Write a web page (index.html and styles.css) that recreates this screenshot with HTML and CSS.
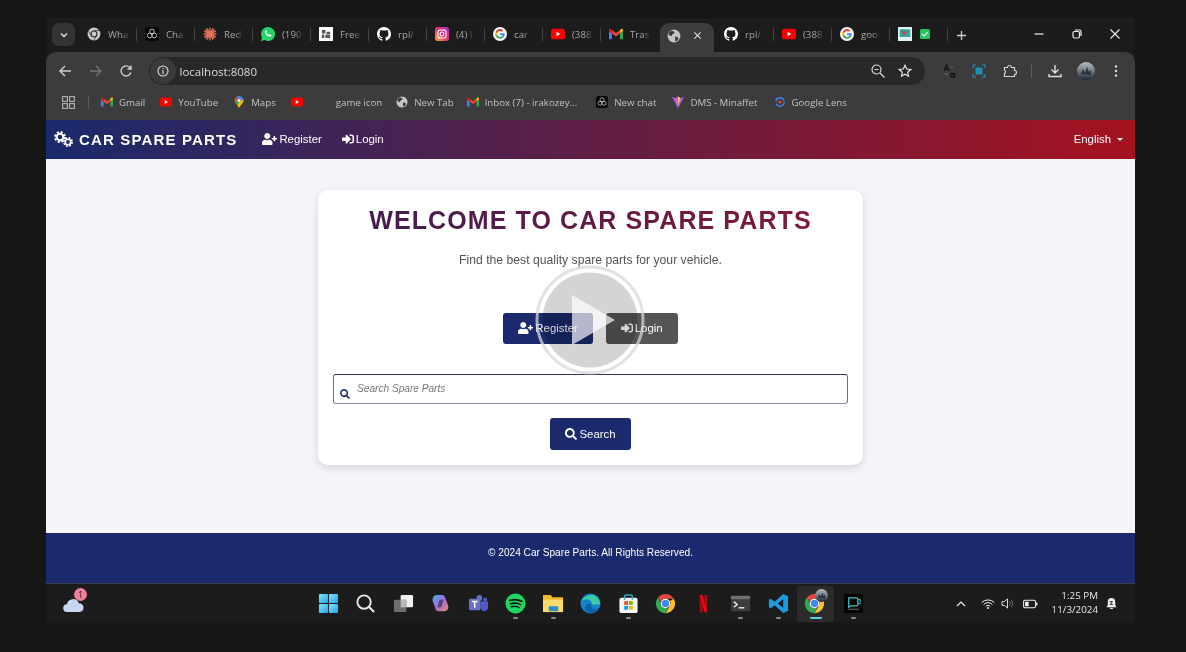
FILE: index.html
```html
<!DOCTYPE html>
<html lang="en">
<head>
<meta charset="utf-8">
<title>Car Spare Parts</title>
<link rel="stylesheet" href="styles.css">
</head>
<body>
<svg class="defs" aria-hidden="true">
  <defs>
    <linearGradient id="winG" x1="0" y1="0" x2="1" y2="1"><stop offset="0" stop-color="#7fe3f9"/><stop offset="1" stop-color="#1fa6ec"/></linearGradient>
    <linearGradient id="copG" x1="0" y1="0" x2="1" y2="1"><stop offset="0" stop-color="#3fb4e8"/><stop offset=".5" stop-color="#a06be0"/><stop offset="1" stop-color="#f4895a"/></linearGradient>
    <linearGradient id="igG" x1="0" y1="1" x2="1" y2="0"><stop offset="0" stop-color="#fbb03b"/><stop offset=".5" stop-color="#e1306c"/><stop offset="1" stop-color="#a634c9"/></linearGradient>
    <linearGradient id="avG" x1="0" y1="0" x2="0" y2="1"><stop offset="0" stop-color="#b9bcc0"/><stop offset=".55" stop-color="#6b7480"/><stop offset="1" stop-color="#1c2430"/></linearGradient>
    <symbol id="search" viewBox="0 0 512 512"><path d="M505 442.7L405.3 343c-4.5-4.5-10.6-7-17-7H372c27.6-35.3 44-79.7 44-128C416 93.1 322.9 0 208 0S0 93.1 0 208s93.1 208 208 208c48.3 0 92.7-16.4 128-44v16.3c0 6.4 2.5 12.5 7 17l99.7 99.7c9.4 9.4 24.6 9.4 33.9 0l28.3-28.3c9.4-9.4 9.4-24.6.1-34zM208 336c-70.7 0-128-57.2-128-128 0-70.7 57.2-128 128-128 70.7 0 128 57.2 128 128 0 70.7-57.2 128-128 128z"/></symbol>
    <symbol id="userplus" viewBox="0 0 640 512"><path d="M624 208h-64v-64c0-8.8-7.2-16-16-16h-32c-8.8 0-16 7.2-16 16v64h-64c-8.8 0-16 7.2-16 16v32c0 8.8 7.2 16 16 16h64v64c0 8.8 7.2 16 16 16h32c8.8 0 16-7.2 16-16v-64h64c8.8 0 16-7.2 16-16v-32c0-8.8-7.2-16-16-16zm-400 48c70.7 0 128-57.3 128-128S294.7 0 224 0 96 57.3 96 128s57.3 128 128 128zm89.6 32h-16.7c-22.2 10.2-46.9 16-72.9 16s-50.6-5.8-72.9-16h-16.7C60.2 288 0 348.2 0 422.4V464c0 26.5 21.5 48 48 48h352c26.5 0 48-21.5 48-48v-41.6c0-74.2-60.2-134.4-134.4-134.4z"/></symbol>
    <symbol id="signin" viewBox="0 0 512 512"><path d="M416 448h-84c-6.6 0-12-5.4-12-12v-40c0-6.6 5.4-12 12-12h84c17.7 0 32-14.3 32-32V160c0-17.7-14.3-32-32-32h-84c-6.6 0-12-5.4-12-12V76c0-6.6 5.4-12 12-12h84c53 0 96 43 96 96v192c0 53-43 96-96 96zm-47-201L201 79c-15-15-41-4.5-41 17v96H24c-13.3 0-24 10.7-24 24v96c0 13.3 10.7 24 24 24h136v96c0 21.5 26 32 41 17l168-168c9.3-9.4 9.3-24.6 0-34z"/></symbol>
    <symbol id="chrome" viewBox="0 0 24 24"><path fill="#e8453c" d="M12 1a11 11 0 0 1 9.500 5.500H12a5.500 5.500 0 0 0-5 3.200L3.400 5.200A11 11 0 0 1 12 1z"/><path fill="#fbc02d" d="M21.500 6.500A11 11 0 0 1 12 23l4.700-8.200A5.500 5.500 0 0 0 16.800 9z"/><path fill="#34a853" d="M3.400 5.200 7.900 13a5.500 5.500 0 0 0 6.700 4.100L12 23A11 11 0 0 1 3.400 5.200z"/><circle cx="12" cy="12" r="5.400" fill="#fff"/><circle cx="12" cy="12" r="4.200" fill="#4285f4"/></symbol>
    <symbol id="chromegrey" viewBox="0 0 24 24"><circle cx="12" cy="12" r="11" fill="#c9c9c9"/><circle cx="12" cy="12" r="6" fill="#2a2a2a"/><circle cx="12" cy="12" r="4.200" fill="#c9c9c9"/><path d="M12 6h9M7 15 2.800 7M16 15l-4.500 8" stroke="#2a2a2a" stroke-width="1.200" fill="none"/></symbol>
    <symbol id="g" viewBox="0 0 24 24"><circle cx="12" cy="12" r="12" fill="#fff"/><path fill="#4285f4" d="M20 12.200c0-.6 0-1.100-.1-1.600H12v3h4.500a3.900 3.900 0 0 1-1.700 2.500v2.100h2.700c1.600-1.400 2.500-3.500 2.500-6z"/><path fill="#34a853" d="M12 20.300c2.200 0 4.100-.7 5.500-2.100l-2.700-2.100a5 5 0 0 1-7.500-2.700H4.500v2.100a8.300 8.300 0 0 0 7.500 4.800z"/><path fill="#fbbc05" d="M7.300 13.400a5 5 0 0 1 0-3.200V8.100H4.500a8.300 8.300 0 0 0 0 7.400z"/><path fill="#ea4335" d="M12 6.900c1.200 0 2.300.4 3.200 1.200l2.400-2.400A8.300 8.300 0 0 0 4.500 8.100l2.800 2.100A5 5 0 0 1 12 6.900z"/></symbol>
    <symbol id="gh" viewBox="0 0 16 16"><path fill="#fff" d="M8 0C3.58 0 0 3.58 0 8c0 3.54 2.29 6.53 5.47 7.59.4.07.55-.17.55-.38 0-.19-.01-.82-.01-1.49-2.01.37-2.53-.49-2.69-.94-.09-.23-.48-.94-.82-1.13-.28-.15-.68-.52-.01-.53.63-.01 1.08.58 1.23.82.72 1.21 1.87.87 2.33.66.07-.52.28-.87.51-1.07-1.78-.2-3.64-.89-3.64-3.95 0-.87.31-1.59.82-2.15-.08-.2-.36-1.02.08-2.12 0 0 .67-.21 2.2.82.64-.18 1.32-.27 2-.27s1.36.09 2 .27c1.53-1.04 2.2-.82 2.2-.82.44 1.1.16 1.92.08 2.12.51.56.82 1.27.82 2.15 0 3.07-1.87 3.75-3.65 3.95.29.25.54.73.54 1.48 0 1.07-.01 1.93-.01 2.2 0 .21.15.46.55.38A8 8 0 0 0 16 8c0-4.42-3.58-8-8-8z"/></symbol>
    <symbol id="yt" viewBox="0 0 24 18"><rect width="24" height="18" rx="4.500" fill="#f00"/><path d="M9.500 5.200v7.600l6.500-3.800z" fill="#fff"/></symbol>
    <symbol id="gmail" viewBox="0 0 24 18"><path fill="#4285f4" d="M1 18h4V8L0 4v12.500A1.500 1.500 0 0 0 1 18z"/><path fill="#34a853" d="M19 18h4a1.500 1.500 0 0 0 1-1.500V4l-5 4z"/><path fill="#ea4335" d="M5 8V2l7 5.300L19 2v6l-7 5.200z"/><path fill="#fbbc04" d="M19 2v6l5-4V2c0-2-2.400-2.600-3.500-1.500z"/><path fill="#c5221f" d="M0 4l5 4V2L3.500.5C2.400-.6 0 0 0 2z"/></symbol>
    <symbol id="globe" viewBox="0 0 24 24"><circle cx="12" cy="12" r="11" fill="#c4c4c4"/><path fill="#3a3a3a" d="M8 2.500 13 5l-1 3-3 1-1 3-4-1-1.500-3A10 10 0 0 1 8 2.500zM14 13l5 1 .5 3-3.500 4.500-2-1.500z"/></symbol>
    <symbol id="oai" viewBox="0 0 24 24"><rect width="24" height="24" rx="5" fill="#050505"/><g fill="none" stroke="#ddd" stroke-width="1.400"><circle cx="12" cy="7.500" r="4"/><circle cx="8" cy="14.500" r="4"/><circle cx="16" cy="14.500" r="4"/></g></symbol>
    <symbol id="gear" viewBox="0 0 20 20"><circle cx="10" cy="10" r="5.500" fill="none" stroke="#fff" stroke-width="3.400"/><circle cx="10" cy="10" r="8.300" fill="none" stroke="#fff" stroke-width="3.200" stroke-dasharray="3.700 2.820"/></symbol>
    <symbol id="pin" viewBox="0 0 18 24"><path fill="#34a853" d="M9 24C6 18 0 14 0 9a9 9 0 0 1 4-7.500L12 14z"/><path fill="#fbbc04" d="M9 24c3-6 9-10 9-15 0-1.500-.4-3-1-4L6 17z"/><path fill="#4285f4" d="M4 1.500A9 9 0 0 1 17 5L12 11z"/><path fill="#ea4335" d="M0 9a9 9 0 0 1 4-7.500L8 6 3 12z"/><circle cx="9" cy="9" r="3" fill="#fff"/></symbol>
  </defs>
</svg>

<div class="window">
  <div class="tabstrip">
    <div class="tabmenu"><svg class="ic10" viewBox="0 0 10 10"><path d="M2 3.500 5 6.500 8 3.500" fill="none" stroke="#ddd" stroke-width="1.500"/></svg></div>
    <div class="tab"><svg class="tabic"><use href="#chromegrey"/></svg><span class="tabtext">Wha</span><i class="sep"></i></div>
    <div class="tab"><svg class="tabic"><use href="#oai"/></svg><span class="tabtext">Cha</span><i class="sep"></i></div>
    <div class="tab"><svg class="tabic" viewBox="0 0 24 24"><g stroke="#e2725b" stroke-width="2.200"><path d="M12 1v22M1 12h22M4 4l16 16M20 4 4 20M7 2l10 20M17 2 7 22M2 7l20 10M22 7 2 17"/></g></svg><span class="tabtext">Red</span><i class="sep"></i></div>
    <div class="tab"><svg class="tabic" viewBox="0 0 24 24"><path fill="#25d366" d="M12 0a12 12 0 0 0-10.300 18L0 24l6.200-1.600A12 12 0 1 0 12 0z"/><path fill="#fff" d="M8.500 5.500c-.5 0-1.700.8-1.700 3s2.200 5.500 4.500 7c2.500 1.600 5 1.900 6 .2.600-1 .7-2 .4-2.200l-2.700-1.300c-.4 0-1 1.200-1.500 1.400-1 .2-4-2.400-4.400-3.600 0-.4 1-1.200.9-1.700L9.400 5.800c-.2-.3-.6-.3-.9-.3z"/></svg><span class="tabtext">(190</span><i class="sep"></i></div>
    <div class="tab"><svg class="tabic" viewBox="0 0 24 24"><rect width="24" height="24" fill="#fff"/><path fill="#555" d="M5 5h6v6H5zM13 8h6v4h-6zM5 13h4v6H5zM11 13h8v6h-8z"/></svg><span class="tabtext">Free</span><i class="sep"></i></div>
    <div class="tab"><svg class="tabic"><use href="#gh"/></svg><span class="tabtext">rpl/</span><i class="sep"></i></div>
    <div class="tab"><svg class="tabic" viewBox="0 0 24 24"><rect width="24" height="24" rx="5" fill="url(#igG)"/><rect x="5" y="5" width="14" height="14" rx="4" fill="none" stroke="#fff" stroke-width="1.800"/><circle cx="12" cy="12" r="3.300" fill="none" stroke="#fff" stroke-width="1.800"/></svg><span class="tabtext">(4) I</span><i class="sep"></i></div>
    <div class="tab"><svg class="tabic"><use href="#g"/></svg><span class="tabtext">car</span><i class="sep"></i></div>
    <div class="tab"><svg class="tabic"><use href="#yt"/></svg><span class="tabtext">(388</span><i class="sep"></i></div>
    <div class="tab"><svg class="tabic"><use href="#gmail"/></svg><span class="tabtext">Tras</span></div>
    <div class="tab tab-active"><svg class="tabic"><use href="#globe"/></svg><svg class="tabclose" viewBox="0 0 10 10"><path d="M1.500 1.500l7 7M8.500 1.500l-7 7" stroke="#e0e0e0" stroke-width="1.200"/></svg></div>
    <div class="tab"><svg class="tabic"><use href="#gh"/></svg><span class="tabtext">rpl/</span><i class="sep"></i></div>
    <div class="tab"><svg class="tabic"><use href="#yt"/></svg><span class="tabtext">(388</span><i class="sep"></i></div>
    <div class="tab"><svg class="tabic"><use href="#g"/></svg><span class="tabtext">goo</span><i class="sep"></i></div>
    <div class="tab"><svg class="tabic" viewBox="0 0 24 24"><rect width="24" height="24" fill="#dff3f2"/><rect x="3" y="4" width="18" height="13" fill="#2ba7a0"/><circle cx="11" cy="10" r="3.500" fill="#e23b4a"/></svg><svg class="tabic tabic-gap" viewBox="0 0 24 24"><rect x="2" y="2" width="20" height="20" rx="3" fill="#25c55e"/><path d="M6.500 12l4 4 7-8" fill="none" stroke="#fff" stroke-width="2.200"/></svg><i class="sep"></i></div>
    <svg class="newtab" viewBox="0 0 12 12"><path d="M6 1v10M1 6h10" stroke="#cfcfcf" stroke-width="1.400"/></svg>
    <div class="winctrls">
      <svg class="ic10" viewBox="0 0 10 10"><path d="M.5 5h9" stroke="#eee" stroke-width="1.200"/></svg>
      <svg class="ic10" viewBox="0 0 10 10"><rect x="1" y="2.500" width="6.500" height="6.500" rx="1.500" fill="none" stroke="#eee" stroke-width="1.200"/><path d="M3 1h4.500A1.500 1.500 0 0 1 9 2.500V7" fill="none" stroke="#eee" stroke-width="1.200"/></svg>
      <svg class="ic10" viewBox="0 0 10 10"><path d="M.5.500l9 9M9.500.500l-9 9" stroke="#eee" stroke-width="1.100"/></svg>
    </div>
  </div>

  <div class="chrome-top">
    <div class="toolbar">
      <svg class="tool" viewBox="0 0 14 14"><path d="M13 7H2M7 2 2 7l5 5" fill="none" stroke="#cfcfcf" stroke-width="1.400"/></svg>
      <svg class="tool" viewBox="0 0 14 14"><path d="M1 7h11M7 2l5 5-5 5" fill="none" stroke="#747474" stroke-width="1.400"/></svg>
      <svg class="tool" viewBox="0 0 14 14"><path d="M11.800 8.500A5 5 0 1 1 10.500 3.300L12 5M12 1.500V5H8.500" fill="none" stroke="#cfcfcf" stroke-width="1.400"/></svg>
      <div class="omnibox">
        <span class="infochip"><svg class="ic12" viewBox="0 0 12 12"><circle cx="6" cy="6" r="5" fill="none" stroke="#ddd" stroke-width="1.100"/><path d="M6 5.200V9M6 3v1.100" stroke="#ddd" stroke-width="1.200"/></svg></span>
        <span class="url">localhost:8080</span>
        <svg class="ic14 omni-zoom" viewBox="0 0 14 14"><circle cx="5.500" cy="5.500" r="4.500" fill="none" stroke="#ddd" stroke-width="1.200"/><path d="M3.500 5.500h4M9 9l4.500 4.500" stroke="#ddd" stroke-width="1.200"/></svg>
        <svg class="ic14 omni-star" viewBox="0 0 14 14"><path d="M7 1.300l1.700 3.700 4 .5-3 2.700.8 4L7 10.200l-3.500 2 .8-4-3-2.700 4-.5z" fill="none" stroke="#e5e5e5" stroke-width="1.200"/></svg>
      </div>
      <div class="toolright">
        <svg class="ic14 t-trans" viewBox="0 0 14 14"><path d="M1 7 3.500 1 6 7M2 5h3" fill="none" stroke="#111" stroke-width="1.200"/><path d="M8 9.500h3.500V13H9a1.500 1.500 0 0 1 0-3h2.500" fill="none" stroke="#111" stroke-width="1.300"/><path d="M8 3h2M2 10h3" stroke="#777"/></svg>
        <svg class="ic14 t-shot" viewBox="0 0 14 14"><rect x="3.500" y="3.500" width="7" height="7" fill="#1f8fb5"/><path d="M1 4V1h3M10 1h3v3M13 10v3h-3M4 13H1v-3" fill="none" stroke="#1f8fb5" stroke-width="1.200"/></svg>
        <svg class="ic14 t-ext" viewBox="0 0 14 14"><path d="M1.500 3.500h3a2 2 0 0 1 4 0h3v3a2 2 0 0 1 0 4v2h-10v-3a2 2 0 0 0 0-3.500z" fill="none" stroke="#d5d5d5" stroke-width="1.200"/></svg>
        <i class="t-sep"></i>
        <svg class="ic14 t-dl" viewBox="0 0 14 14"><path d="M7 1v7.500M3.500 5.500 7 9l3.500-3.500M1 10v2.500h12V10" fill="none" stroke="#ddd" stroke-width="1.400"/></svg>
        <svg class="avatar" viewBox="0 0 18 18"><circle cx="9" cy="9" r="9" fill="url(#avG)"/><path d="M4 12l2-5 2 4 2-6 2 5 2-2v5z" fill="#2a3340"/></svg>
        <svg class="ic14 t-dots" viewBox="0 0 14 14"><circle cx="7" cy="2.500" r="1.200" fill="#ddd"/><circle cx="7" cy="7" r="1.200" fill="#ddd"/><circle cx="7" cy="11.500" r="1.200" fill="#ddd"/></svg>
      </div>
    </div>
    <div class="bookmarks">
      <svg class="ic13" viewBox="0 0 13 13"><g fill="none" stroke="#b5b5b5" stroke-width="1.100"><rect x=".6" y=".6" width="4.800" height="4.800"/><rect x="7.600" y=".6" width="4.800" height="4.800"/><rect x=".6" y="7.600" width="4.800" height="4.800"/><rect x="7.600" y="7.600" width="4.800" height="4.800"/></g></svg>
      <i class="bm-sep"></i>
      <span class="bm"><svg class="bmic"><use href="#gmail"/></svg>Gmail</span>
      <span class="bm"><svg class="bmic"><use href="#yt"/></svg>YouTube</span>
      <span class="bm"><svg class="bmic"><use href="#pin"/></svg>Maps</span>
      <span class="bm"><svg class="bmic"><use href="#yt"/></svg></span>
      <span class="bm bm-game">game icon</span>
      <span class="bm"><svg class="bmic"><use href="#globe"/></svg>New Tab</span>
      <span class="bm bm-inbox"><svg class="bmic"><use href="#gmail"/></svg>Inbox (7) - irakozey...</span>
      <span class="bm bm-chat"><svg class="bmic"><use href="#oai"/></svg>New chat</span>
      <span class="bm bm-dms"><svg class="bmic" viewBox="0 0 14 14"><path d="M0 1l7 13 7-13-4 1.500L7 .5 4 2.500z" fill="#bd5cf5"/><path d="M7 1 9.500 2 7 11z" fill="#ffcf33"/></svg>DMS - Minaffet</span>
      <span class="bm"><svg class="bmic" viewBox="0 0 14 14"><circle cx="7" cy="7" r="5" fill="none" stroke="#4285f4" stroke-width="1.800" stroke-dasharray="8 0 5 3"/><circle cx="7" cy="7" r="1.800" fill="#ea4335"/></svg>Google Lens</span>
    </div>
  </div>

  <nav class="appnav">
    <span class="cogs"><svg class="cog-big"><use href="#gear"/></svg><svg class="cog-small"><use href="#gear"/></svg></span>
    <span class="brand">CAR SPARE PARTS</span>
    <a class="navlink navlink-first"><svg class="fa-user"><use href="#userplus"/></svg>Register</a>
    <a class="navlink"><svg class="fa-sign"><use href="#signin"/></svg>Login</a>
    <a class="lang">English<i class="caret"></i></a>
  </nav>

  <main class="content">
    <section class="card">
      <h1 class="title">WELCOME TO CAR SPARE PARTS</h1>
      <p class="lead">Find the best quality spare parts for your vehicle.</p>
      <div class="actions">
        <a class="btn btn-navy"><svg class="fa-user"><use href="#userplus"/></svg>Register</a>
        <a class="btn btn-grey"><svg class="fa-sign"><use href="#signin"/></svg>Login</a>
      </div>
      <div class="searchbox">
        <svg class="searchbox-ic"><use href="#search"/></svg>
        <span class="placeholder">Search Spare Parts</span>
      </div>
      <a class="btn btn-navy btn-search"><svg class="fa-search"><use href="#search"/></svg>Search</a>
    </section>
  </main>

  <footer class="appfoot">© 2024 Car Spare Parts. All Rights Reserved.</footer>

  <div class="taskbar">
    <div class="weather">
      <svg class="cloud" viewBox="0 0 24 16"><path d="M5 16a4.500 4.500 0 0 1-.5-9A7 7 0 0 1 18 6a5 5 0 0 1 1 10z" fill="#c9d6f2"/></svg>
      <b class="badge">1</b>
    </div>
    <div class="apps">
      <span class="app"><svg class="appic" viewBox="0 0 22 22"><g fill="url(#winG)"><rect x="1" y="1" width="9.500" height="9.500" rx="1"/><rect x="11.500" y="1" width="9.500" height="9.500" rx="1"/><rect x="1" y="11.500" width="9.500" height="9.500" rx="1"/><rect x="11.500" y="11.500" width="9.500" height="9.500" rx="1"/></g></svg><i class="dot dot-none"></i></span>
      <span class="app"><svg class="appic" viewBox="0 0 22 22"><circle cx="9.500" cy="9.500" r="7" fill="none" stroke="#e6e6e6" stroke-width="2"/><path d="M14.500 14.500 20 20" stroke="#e6e6e6" stroke-width="2.200"/></svg><i class="dot dot-none"></i></span>
      <span class="app"><svg class="appic" viewBox="0 0 22 22"><rect x="8" y="2" width="13" height="13" rx="1.500" fill="#f2f2f2"/><rect x="1" y="7" width="13" height="13" rx="1.500" fill="#6e6e6e"/><rect x="8" y="7" width="6" height="8" fill="#b8b8b8"/></svg><i class="dot dot-none"></i></span>
      <span class="app"><svg class="appic" viewBox="0 0 22 22"><path d="M7 2h6c2 0 2.500 2 3 3l3 8c1 3-1 6-4 6H9c-2 0-3-1-3.500-3L3 9C2 5 4 2 7 2z" fill="url(#copG)"/><path d="M10 7h4l-2 8H8z" fill="#1c1c1c" opacity=".55"/></svg><i class="dot dot-none"></i></span>
      <span class="app"><svg class="appic" viewBox="0 0 22 22"><circle cx="12" cy="5" r="3" fill="#6a6fc9"/><circle cx="18" cy="7" r="2.200" fill="#5059c9"/><path d="M13 9h8v6c0 3-2 4-4 4s-4-2-4-4z" fill="#5059c9"/><rect x="1" y="6" width="12" height="12" rx="1.500" fill="#6a6fc9"/><path d="M4 9h6M7 9v6.500" stroke="#fff" stroke-width="1.600"/></svg><i class="dot dot-none"></i></span>
      <span class="app"><svg class="appic" viewBox="0 0 22 22"><circle cx="11" cy="11" r="10.500" fill="#1ed760"/><g fill="none" stroke="#111" stroke-linecap="round"><path d="M5 7.800c4-1.200 9-.9 12.500 1" stroke-width="2"/><path d="M5.800 11.200c3.500-1 7.500-.7 10.500 1" stroke-width="1.700"/><path d="M6.500 14.400c3-.8 6-.5 8.500.9" stroke-width="1.400"/></g></svg><i class="dot"></i></span>
      <span class="app"><svg class="appic" viewBox="0 0 22 22"><path d="M0 2h8l2 2.500H21V20H0z" fill="#f3b72e"/><path d="M0 7h21v13H0z" fill="#fbdc6a"/><rect x="6" y="14" width="10" height="5" rx="1" fill="#2b8fd0"/></svg><i class="dot"></i></span>
      <span class="app"><svg class="appic" viewBox="0 0 22 22"><circle cx="11" cy="11" r="10.500" fill="#1583c9"/><path d="M21 12c0-6-4-10-9-10C6 2 2 6 1 10c2-3 5-4 8-3 3 1 4 3 3 5h9z" fill="#3cc9a7"/><path d="M12 12c-1 3 1 5 4 5 2 0 3-.5 4-1.500-2 4-5 5.500-8 5.500-4 0-7-3-6-7 .5-2 3-4 6-2z" fill="#0f5ea8"/></svg><i class="dot dot-none"></i></span>
      <span class="app"><svg class="appic" viewBox="0 0 22 22"><rect x="1.500" y="5" width="19" height="16" rx="2" fill="#f6f6f6"/><path d="M7 7V3.500A1.500 1.500 0 0 1 8.500 2h5A1.500 1.500 0 0 1 15 3.500V7" fill="none" stroke="#35a8c4" stroke-width="1.600"/><rect x="6.500" y="8.500" width="4" height="4" fill="#f25022"/><rect x="11.500" y="8.500" width="4" height="4" fill="#7fba00"/><rect x="6.500" y="13.500" width="4" height="4" fill="#00a4ef"/><rect x="11.500" y="13.500" width="4" height="4" fill="#ffb900"/></svg><i class="dot"></i></span>
      <span class="app"><svg class="appic"><use href="#chrome"/></svg><i class="dot dot-none"></i></span>
      <span class="app"><svg class="appic" viewBox="0 0 22 22"><path d="M7 2h3v18l-3 .5zM12 2h3v18.500l-3-.5z" fill="#b20710"/><path d="M7 2h3l5 18.500-3-.5z" fill="#e50914"/></svg><i class="dot dot-none"></i></span>
      <span class="app"><svg class="appic" viewBox="0 0 22 22"><rect x="1" y="3" width="20" height="16" rx="1.500" fill="#3c3c3c"/><rect x="1" y="3" width="20" height="3.500" fill="#707070"/><path d="M4 9l3.500 3L4 15" fill="none" stroke="#eee" stroke-width="1.500"/><path d="M9 15.500h6" stroke="#eee" stroke-width="1.500"/></svg><i class="dot"></i></span>
      <span class="app"><svg class="appic" viewBox="0 0 22 22"><path d="M16 1l5 2.500v15L16 21 7 12.800 3 16l-2-1V7l2-1 4 3.200z" fill="#1c9ce0"/><path d="M16 6.500 10 11l6 4.500z" fill="#1c1c1c"/></svg><i class="dot"></i></span>
      <span class="app app-active"><span class="appstack"><svg class="appic"><use href="#chrome"/></svg><svg class="app-avatar" viewBox="0 0 18 18"><circle cx="9" cy="9" r="9" fill="url(#avG)"/><path d="M4 12l2-5 2 4 2-6 2 5 2-2v5z" fill="#2a3340"/></svg></span><i class="dot dot-active"></i></span>
      <span class="app"><svg class="appic" viewBox="0 0 22 22"><rect x="1" y="1" width="20" height="20" fill="#050505"/><path d="M6 5h8a1.500 1.500 0 0 1 1.500 1.500V12A1.500 1.500 0 0 1 14 13.500H8L6 15z" fill="none" stroke="#3cc4c4" stroke-width="1.300"/><path d="M15.500 7.500 18 6.500v5l-2.500-1" fill="none" stroke="#3cc4c4"/><path d="M5 17h12" stroke="#888" stroke-width=".8"/></svg><i class="dot"></i></span>
    </div>
    <div class="tray">
      <svg class="tr-chev" viewBox="0 0 10 6"><path d="M1 5 5 1l4 4" fill="none" stroke="#eee" stroke-width="1.200"/></svg>
      <svg class="tr-wifi" viewBox="0 0 14 10"><g fill="none" stroke="#eee" stroke-width="1"><path d="M.7 3.500a9 9 0 0 1 12.600 0M2.700 5.500a6 6 0 0 1 8.600 0M4.700 7.500a3 3 0 0 1 4.600 0"/></g><circle cx="7" cy="9" r="1" fill="#eee"/></svg>
      <svg class="tr-vol" viewBox="0 0 14 12"><path d="M1 4h2.500L7 1v10L3.500 8H1z" fill="none" stroke="#eee"/><path d="M9 3.500a3.500 3.500 0 0 1 0 5M11 2a6 6 0 0 1 0 8" fill="none" stroke="#777"/></svg>
      <svg class="tr-bat" viewBox="0 0 16 10"><rect x=".6" y="1" width="12.800" height="8" rx="1.500" fill="none" stroke="#eee" stroke-width="1.100"/><rect x="2.200" y="2.600" width="3.800" height="4.800" fill="#eee"/><rect x="14" y="3.500" width="1.500" height="3" fill="#eee"/></svg>
      <span class="clock"><span>1:25 PM</span><span>11/3/2024</span></span>
      <svg class="tr-bell" viewBox="0 0 14 14"><path d="M7 1a4 4 0 0 0-4 4v3.500L1.500 11h11L11 8.500V5a4 4 0 0 0-4-4z" fill="#eee"/><path d="M5.500 12.300h3" stroke="#eee" stroke-width="1.300"/><path d="M5 5h3L5.500 8H8.500" fill="none" stroke="#1c1c1c"/></svg>
    </div>
  </div>
</div>

<svg class="playover" viewBox="0 0 116 116" aria-hidden="true">
  <circle cx="58" cy="58" r="47.500" fill="rgba(0,0,0,.17)"/>
  <circle cx="58" cy="58" r="53" fill="none" stroke="rgba(215,215,215,.75)" stroke-width="3"/>
  <path d="M40 33 83 58 40 83z" fill="rgba(255,255,255,.68)"/>
</svg>
</body>
</html>
```
FILE: styles.css
```css
* { box-sizing: border-box; }
html, body { margin: 0; height: 652px; overflow: hidden; }
body { background: #161616; padding: 18px 51px 0 46px; position: relative; font-family: "Liberation Sans", Arial, sans-serif; }
a { color: inherit; text-decoration: none; }
i, b { font-style: normal; }
svg { display: block; flex: none; fill: currentColor; }
.defs { width: 0; height: 0; overflow: hidden; }
.ic10 { width: 10px; height: 10px; }
.ic12 { width: 12px; height: 12px; }
.ic13 { width: 13px; height: 13px; }
.ic14 { width: 14px; height: 14px; }

.window { width: 1089px; height: 605px; display: flex; flex-direction: column; background: #1c1c1c; filter: blur(.35px); }

/* tab strip */
.tabstrip { height: 34px; flex: none; display: flex; align-items: flex-start; padding: 5px 0 0 6px; font-family: "Open Sans", "Noto Sans", sans-serif; font-size: 9.700px; color: #a8a8a8; }
.tabmenu { width: 23px; height: 23px; margin-right: 4px; border-radius: 7px; background: #343434; display: flex; align-items: center; justify-content: center; }
.tab { width: 58px; height: 24px; display: flex; align-items: center; padding: 0 0 2px 8px; }
.tabic { width: 14px; height: 14px; margin-right: 7px; }
.tabic-gap { margin-left: 0; margin-right: 0; width: 12px; height: 12px; }
.tabtext { white-space: nowrap; -webkit-mask-image: linear-gradient(90deg, #000 65%, rgba(0,0,0,.25)); mask-image: linear-gradient(90deg, #000 65%, rgba(0,0,0,.25)); }
.sep { width: 1px; height: 13px; background: #444; margin-left: auto; }
.tab-active { width: 54px; height: 29px; margin: 0 2px 0 1px; padding: 0 0 4px 7px; background: #3c3c3c; border-radius: 9px 9px 0 0; }
.tabclose { width: 9px; height: 9px; margin-left: 5px; }
.newtab { width: 11px; height: 11px; margin: 7px 0 0 8px; }
.winctrls { display: flex; gap: 28px; margin: 6px 0 0 auto; padding-right: 15px; }

/* toolbar + bookmarks */
.chrome-top { flex: none; height: 68px; background: #3c3c3c; border-radius: 10px 10px 0 0; font-family: "Open Sans", "Noto Sans", sans-serif; }
.toolbar { height: 36px; display: flex; align-items: center; padding: 2px 0 0 12px; }
.tool { width: 14px; height: 14px; margin-right: 16.500px; }
.omnibox { width: 776px; height: 28px; margin-left: -1px; border-radius: 14px; background: #282828; display: flex; align-items: center; padding: 0 13px 0 1px; }
.infochip { width: 26px; height: 26px; border-radius: 50%; background: #3a3a3a; display: flex; align-items: center; justify-content: center; margin-right: 4px; }
.url { color: #dcdcdc; font-size: 11.500px; }
.omni-zoom { margin-left: auto; margin-right: 13px; }
.toolright { display: flex; align-items: center; margin-left: 18px; }
.t-shot { margin-left: 15px; }
.t-ext { margin-left: 17px; }
.t-sep { width: 1px; height: 14px; background: #5c5c5c; margin-left: 14px; }
.t-dl { margin-left: 16px; }
.avatar { width: 18px; height: 18px; margin-left: 15px; }
.t-dots { margin-left: 14px; }
.bookmarks { height: 32px; padding: 0 0 4px 16px; display: flex; align-items: center; color: #c2c2c2; font-size: 9.700px; }
.bm-sep { width: 1px; height: 13px; background: #5c5c5c; margin: 0 12px 0 13px; }
.bm { display: flex; align-items: center; gap: 6px; margin-right: 15px; white-space: nowrap; }
.bmic { width: 12px; height: 12px; }
.bm-game { margin-left: 18px; margin-right: 14px; }
.bm-inbox { margin-left: -2px; margin-right: 19px; }
.bm-chat { margin-right: 16px; }
.bm-dms { margin-right: 16px; }

/* app nav */
.appnav { flex: none; height: 39px; display: flex; align-items: center; padding: 0 12px 1px 8px; color: #fff; background: linear-gradient(90deg, #1a2a6c, #a5121f); }
.cogs { width: 19px; height: 16px; margin-right: 6px; display: grid; grid-template-columns: 11px 8px; }
.cog-big { width: 12px; height: 12px; }
.cog-small { width: 10px; height: 10px; margin: 6px 0 0 -2px; }
.brand { font-size: 15px; font-weight: 700; letter-spacing: 1.150px; margin-right: 25px; white-space: nowrap; }
.navlink { display: flex; align-items: center; font-size: 11.400px; margin-right: 20px; }
.fa-user { width: 15px; height: 12px; margin-right: 2px; color: #fff; }
.fa-sign { width: 12px; height: 12px; margin-right: 2px; }
.lang { margin-left: auto; display: flex; align-items: center; font-size: 11.400px; }
.caret { width: 0; height: 0; margin-left: 6px; border: 3px solid transparent; border-top-color: #fff; border-bottom: 0; }

/* content */
.content { flex: 1; background: #f4f5f9; display: flex; justify-content: center; align-items: flex-start; padding-top: 31px; }
.card { width: 545px; height: 275px; padding: 15px; display: flex; flex-direction: column; align-items: center; background: #fff; border-radius: 10px; box-shadow: 0 3px 8px rgba(0,0,0,.13); }
.title { margin: 0; width: 100%; text-align: center; font-size: 25px; line-height: 30px; font-weight: 700; letter-spacing: 1.100px; background: linear-gradient(90deg, #3f1c52, #851a38); -webkit-background-clip: text; background-clip: text; color: transparent; }
.lead { margin: 18px 0 0; font-size: 12.200px; line-height: 14px; color: #555; }
.actions { display: flex; gap: 13px; margin-top: 46px; }
.btn { height: 31px; display: flex; align-items: center; justify-content: center; padding: 0 15px 1px; color: #fff; font-size: 11.400px; border-radius: 3px; }
.btn-navy { background: #1a2a6c; }
.btn-grey { background: #555; }
.searchbox { width: 100%; height: 30px; margin-top: 30px; display: flex; align-items: center; padding-left: 6px; background: #fff; border: 1px solid #2f3160; border-bottom-color: #8a8ca6; border-left-color: #6a6c8c; border-right-color: #6a6c8c; border-radius: 3px; }
.searchbox-ic { width: 10px; height: 10px; margin: 9px 7px 0 0; color: #1a2a6c; }
.placeholder { font-size: 10.150px; font-style: italic; color: #777; padding-bottom: 2px; }
.btn-search { height: 32px; margin-top: 14px; }
.fa-search { width: 12px; height: 12px; margin-right: 2px; }

/* footer */
.appfoot { flex: none; height: 51px; padding-top: 14px; background: #1a2a6c; border-bottom: 1px solid #3a3f55; color: #fff; font-size: 10.150px; line-height: 12px; text-align: center; }

/* taskbar */
.taskbar { flex: none; height: 39px; display: flex; align-items: flex-start; background: #1c1c1c; }
.weather { width: 28px; height: 24px; margin: 4px 0 0 17px; display: flex; align-items: flex-end; }
.cloud { width: 21px; height: 14px; }
.badge { width: 13px; height: 13px; margin: 0 0 11px -10px; border-radius: 50%; background: #ef7f9a; color: #222; font: 400 9px/13px "Open Sans", sans-serif; text-align: center; }
.apps { display: flex; margin-left: 218.250px; }
.app { width: 37.500px; height: 36px; padding-top: 9px; display: flex; flex-direction: column; align-items: center; }
.appic { width: 21px; height: 21px; }
.dot { width: 5px; height: 2.500px; border-radius: 2px; background: #8a8a8a; margin-top: 2.500px; }
.dot-none { background: transparent; }
.app-active { background: #2b2b2b; border-radius: 4px; height: 36px; margin-top: 2px; padding-top: 7px; }
.appstack { display: flex; }
.app-avatar { width: 13px; height: 13px; margin: -4px 0 0 -10px; }
.dot-active { width: 12px; background: #5fc8ee; }
.tray { display: flex; align-items: center; height: 39px; margin-left: auto; padding-right: 17px; color: #eee; font-family: "Open Sans", "Noto Sans", sans-serif; }
.tr-chev { width: 10px; height: 6px; margin-right: 15px; }
.tr-wifi { width: 14px; height: 10px; margin-right: 6px; }
.tr-vol { width: 13px; height: 11px; margin-right: 9px; }
.tr-bat { width: 15px; height: 10px; }
.clock { display: flex; flex-direction: column; align-items: flex-end; width: 60px; margin-top: -2px; font-size: 9.800px; line-height: 14px; color: #e8e8e8; }
.tr-bell { width: 13px; height: 13px; margin-left: 7px; }

/* video play overlay */
.playover { position: absolute; left: 532px; top: 262px; width: 116px; height: 116px; filter: blur(.5px); }
```
